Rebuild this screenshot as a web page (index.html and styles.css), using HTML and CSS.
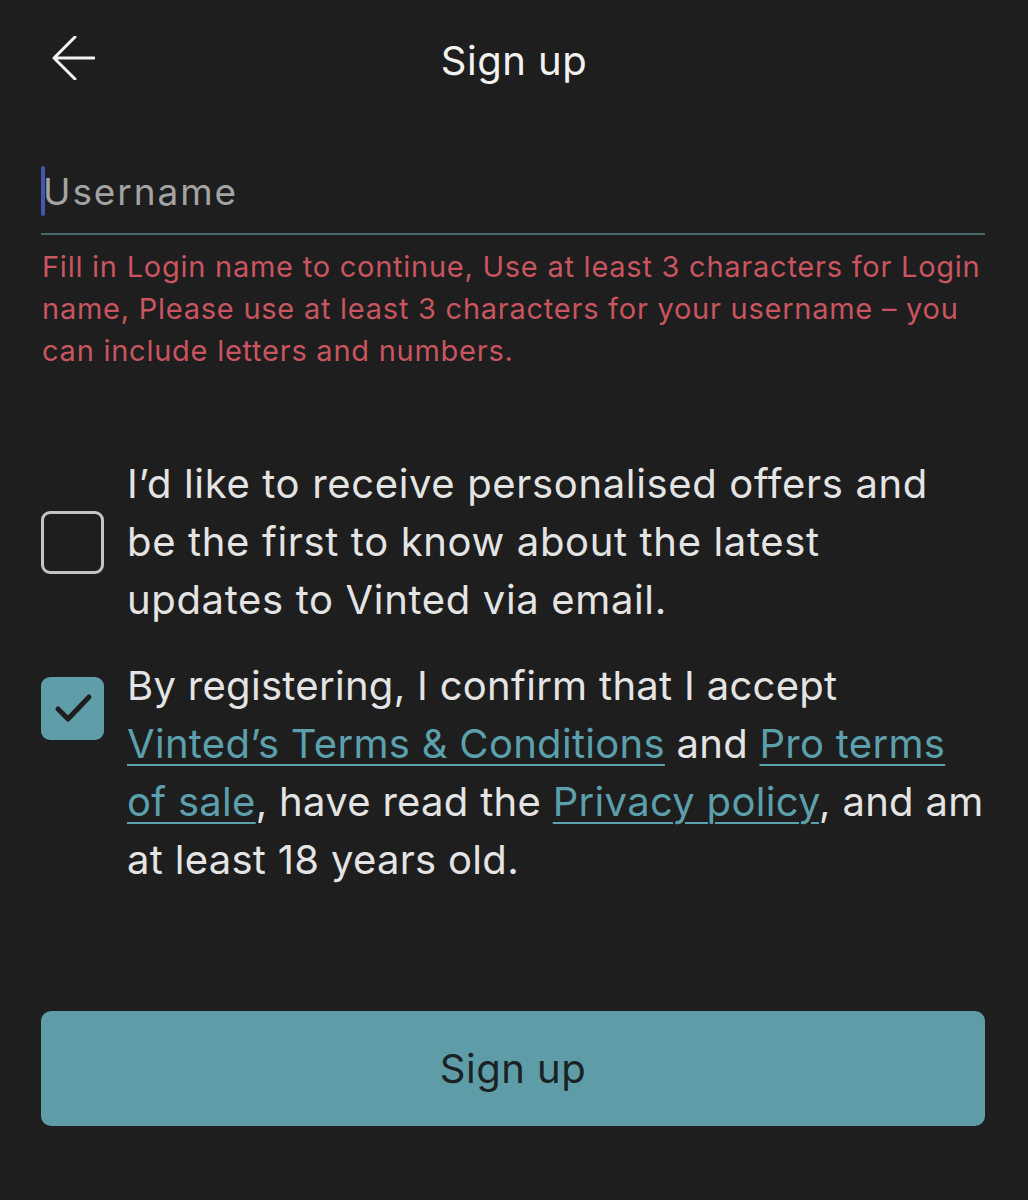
FILE: index.html
```html
<!DOCTYPE html>
<html>

<head>
    <title>Sign up</title>
    <link rel="stylesheet" href="styles.css">
</head>

<body>
    <div class="topbar">
        <a class="back" href="#">
            <svg width="44" height="44" viewBox="0 0 44 44">
                <path d="M43 22 H3 M24 1 L3 22 L24 43" fill="none" stroke="#f2f2f2" stroke-width="3" stroke-linecap="round" stroke-linejoin="round"/>
            </svg>
        </a>
        <h1 class="title">Sign up</h1>
        <span></span>
    </div>

    <div class="page">
        <div class="field">
            <span class="caret"></span>
            <span class="placeholder">Username</span>
        </div>
        <p class="error">Fill in Login name to continue, Use at least 3 characters for Login name, Please use at least 3 characters for your username – you can include letters and numbers.</p>

        <div class="option option-center">
            <span class="checkbox"></span>
            <p class="option-text">I’d like to receive personalised offers and be the first to know about the latest updates to Vinted via email.</p>
        </div>

        <div class="option option-top">
            <span class="checkbox checked">
                <svg width="63" height="63" viewBox="0 0 63 63">
                    <path d="M17 32 L27 42 L48 20" fill="none" stroke="#1e1e1e" stroke-width="5" stroke-linecap="round" stroke-linejoin="round"/>
                </svg>
            </span>
            <p class="option-text terms">By registering, I confirm that I accept <a href="#">Vinted’s Terms &amp; Conditions</a> and <a href="#">Pro terms of sale</a>, have read the <a href="#">Privacy policy</a>, and am at least 18 years old.</p>
        </div>

        <button class="submit">Sign up</button>
    </div>
</body>
</html>
```

FILE: styles.css
```css
body {
    font-family: Inter, "Noto Sans", sans-serif;
    background-color: #1e1e1e;
    margin: 0;
    padding: 0;
}

.topbar {
    height: 120px;
    display: grid;
    grid-template-columns: 1fr auto 1fr;
    align-items: center;
    padding: 0 51px;
}

.back {
    display: flex;
    align-items: center;
    margin-top: -4px;
}

.title {
    margin: 0;
    font-size: 40px;
    font-weight: 400;
    letter-spacing: 0.5px;
    color: #f2f2f2;
}

.page {
    padding: 0 43px 0 41px;
}

.field {
    margin-top: 39px;
    height: 64px;
    padding-bottom: 10px;
    border-bottom: 2px solid #4a6868;
    display: flex;
    align-items: center;
}

.caret {
    width: 4px;
    height: 50px;
    background-color: #4656ad;
    border-radius: 2px;
}

.placeholder {
    font-size: 37px;
    letter-spacing: 1.9px;
    color: #a3a3a3;
    margin-left: -2px;
}

.error {
    margin: 11px 0 0 1px;
    font-size: 29px;
    line-height: 42px;
    letter-spacing: 0.75px;
    color: #c8555f;
}

.option {
    display: flex;
    gap: 23px;
}

.option-center {
    margin-top: 83px;
    align-items: center;
}

.option-top {
    margin-top: 28px;
    align-items: flex-start;
}

.checkbox {
    flex: none;
    width: 63px;
    height: 63px;
    box-sizing: border-box;
    border: 3px solid #c4c4c4;
    border-radius: 9px;
}

.checkbox.checked {
    margin-top: 20px;
    border: none;
    background-color: #5f9ea9;
}

.option-text {
    margin: 0;
    font-size: 40px;
    line-height: 58px;
    letter-spacing: 0.65px;
    color: #e4e4e4;
}

.option-text.terms {
    letter-spacing: 0.3px;
    margin-right: -5px;
}

.option-text a {
    color: #5ba0ac;
    text-decoration: underline;
    text-decoration-thickness: 2px;
    text-underline-offset: 6px;
}

.submit {
    display: block;
    width: 100%;
    height: 115px;
    margin-top: 122px;
    border: none;
    border-radius: 10px;
    background-color: #5e9ca8;
    color: #1b2224;
    font-family: Inter, "Noto Sans", sans-serif;
    font-size: 40px;
    letter-spacing: 0.5px;
    cursor: pointer;
}
```
